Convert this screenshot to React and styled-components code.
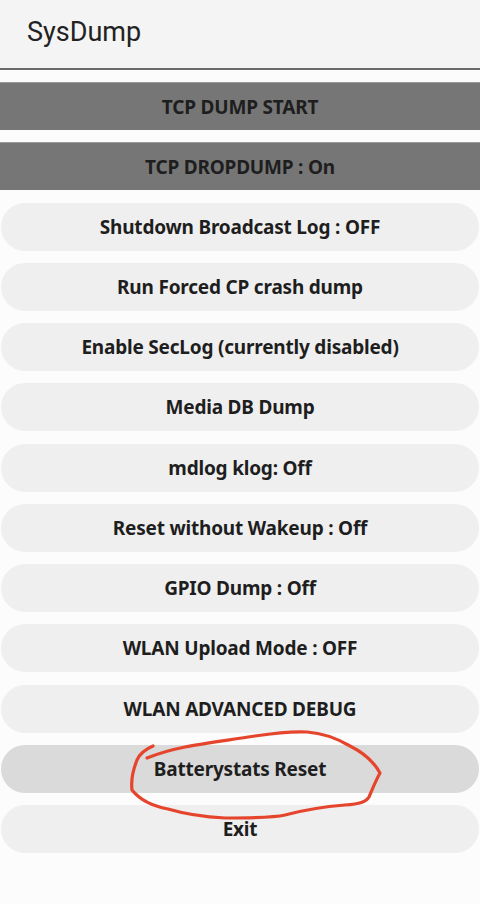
import React from 'react';
import styled, { createGlobalStyle } from 'styled-components';

const GlobalStyle = createGlobalStyle`
  html, body {
    margin: 0;
    padding: 0;
    background: #fcfcfc;
  }
  body {
    font-family: "Noto Sans", "Open Sans", sans-serif;
  }
`;

const items = [
  { label: 'TCP DUMP START', kind: 'flat' },
  { label: 'TCP DROPDUMP : On', kind: 'flat' },
  { label: 'Shutdown Broadcast Log : OFF' },
  { label: 'Run Forced CP crash dump' },
  { label: 'Enable SecLog (currently disabled)' },
  { label: 'Media DB Dump' },
  { label: 'mdlog klog: Off' },
  { label: 'Reset without Wakeup : Off' },
  { label: 'GPIO Dump : Off' },
  { label: 'WLAN Upload Mode : OFF' },
  { label: 'WLAN ADVANCED DEBUG' },
  { label: 'Batterystats Reset', pressed: true },
  { label: 'Exit' },
];

const App = () => {
  return (
    <Screen>
      <GlobalStyle />
      <Header>
        <Title>SysDump</Title>
      </Header>
      <List>
        {items.map((it) => (
          <Button key={it.label} $flat={it.kind === 'flat'} $pressed={it.pressed}>
            {it.label}
          </Button>
        ))}
      </List>
      <Scribble viewBox="0 0 480 904" aria-hidden="true">
        <path
          d="M153 746 C146 749 140 753 137 760 C133 770 131 782 132 790 C140 800 152 806 168 809 C185 814 205 817 225 818 C250 818 272 818 285 815 C300 811 320 807 345 805 C360 804 366 802 369 797 C372 790 376 780 380 773 C374 762 362 752 350 746 C338 739 322 733 307 732 C292 731 275 733 255 736 C230 740 205 743 185 747 C170 750 157 754 147 758"
          fill="none"
          stroke="#e5452c"
          strokeWidth="3.2"
          strokeLinecap="round"
          strokeLinejoin="round"
        />
      </Scribble>
    </Screen>
  );
};

const Screen = styled.div`
  position: relative;
  width: 480px;
  height: 904px;
  overflow: hidden;
  background: #fcfcfc;
`;

const Header = styled.header`
  height: 68px;
  background: #f4f4f4;
  border-bottom: 2px solid #6a6a6a;
  display: flex;
  align-items: center;
  padding-left: 27px;
  box-sizing: content-box;
`;

const Title = styled.h1`
  margin: 0 0 4px;
  font-family: Roboto, "Noto Sans", sans-serif;
  font-weight: 400;
  font-size: 27px;
  color: #222;
`;

const List = styled.div`
  display: flex;
  flex-direction: column;
  gap: 12.25px;
  padding: 12px 1px 0;
`;

const Button = styled.div`
  height: 48px;
  display: flex;
  align-items: center;
  justify-content: center;
  font-size: 19px;
  font-weight: 700;
  color: #1e1e1e;
  letter-spacing: -0.2px;
  background: ${(p) => (p.$flat ? '#767676' : p.$pressed ? '#dadada' : '#efefef')};
  border-radius: ${(p) => (p.$flat ? '0' : '24px')};
  margin: ${(p) => (p.$flat ? '0 -1px' : '0')};
  border-top: ${(p) => (p.$flat ? '1px solid #9a9a9a' : 'none')};
  box-sizing: border-box;
`;

const Scribble = styled.svg`
  position: absolute;
  inset: 0;
  width: 480px;
  height: 904px;
  pointer-events: none;
`;

export default App;
